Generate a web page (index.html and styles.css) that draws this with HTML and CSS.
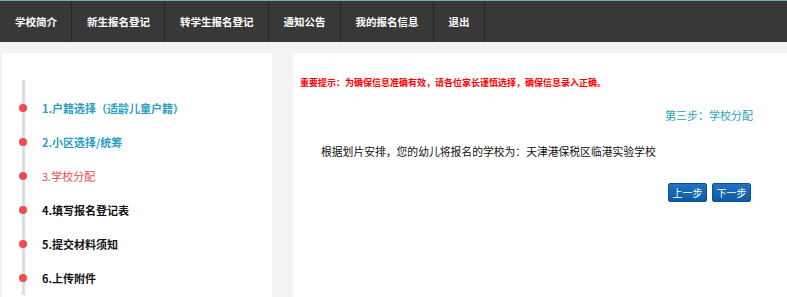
FILE: index.html
```html
<!DOCTYPE html>
<html lang="zh-CN">
<head>
    <meta charset="UTF-8">
    <title>网上报名 - 学校分配</title>
    <link rel="stylesheet" href="styles.css">
</head>
<body>

    <nav class="top-nav">
        <a href="#">学校简介</a>
        <a href="#">新生报名登记</a>
        <a href="#">转学生报名登记</a>
        <a href="#">通知公告</a>
        <a href="#">我的报名信息</a>
        <a href="#">退出</a>
    </nav>

    <div class="main">
        <aside class="side">
            <ul class="steps">
                <li class="done">1.户籍选择（适龄儿童户籍）</li>
                <li class="done">2.小区选择/统筹</li>
                <li class="current">3.学校分配</li>
                <li>4.填写报名登记表</li>
                <li>5.提交材料须知</li>
                <li>6.上传附件</li>
            </ul>
        </aside>

        <section class="content">
            <p class="notice">重要提示：为确保信息准确有效，请各位家长谨慎选择，确保信息录入正确。</p>
            <h3 class="step-title">第三步：学校分配</h3>
            <p class="result">根据划片安排，您的幼儿将报名的学校为：天津港保税区临港实验学校</p>
            <div class="actions">
                <button class="btn">上一步</button>
                <button class="btn">下一步</button>
            </div>
        </section>
    </div>

</body>
</html>
```

FILE: styles.css
```css
:root {
    --dark: #383838;
    --teal: #2a9fc0;
    --red: #f04a4a;
    --page: #f3f3f3;
}

body {
    margin: 0;
    background: var(--page);
    font-family: "Microsoft YaHei", "Noto Sans CJK SC", "Liberation Sans", sans-serif;
    color: #222;
    height: 297px;
    overflow: hidden;
}

.top-nav {
    display: flex;
    height: 41px;
    background: var(--dark);
    border-top: 1px solid #6ab7c4;
}

.top-nav a {
    color: #fff;
    text-decoration: none;
    font-size: 10.5px;
    font-weight: bold;
    line-height: 41px;
    padding: 0 14px 0 15px;
    border-right: 1px solid #262626;
}

.main {
    display: flex;
    gap: 21px;
    padding: 11px 0 0 2px;
    height: 244px;
}

.side {
    width: 270px;
    background: #fff;
}

.steps {
    list-style: none;
    margin: 27px 0 0 20px;
    padding: 11px 0 0 0;
    border-left: 3px solid #ddd;
}

.steps li {
    position: relative;
    height: 34px;
    line-height: 34px;
    padding-left: 17px;
    font-size: 11px;
    font-weight: bold;
    color: #111;
}

.steps li::before {
    content: '';
    position: absolute;
    left: -6px;
    top: 13px;
    width: 8px;
    height: 8px;
    border-radius: 50%;
    background: var(--red);
}

.steps li.done { color: var(--teal); }
.steps li.current { color: var(--red); font-weight: normal; }

.content {
    flex: 1;
    background: #fff;
    padding: 0 34px 0 7px;
}

.notice {
    margin: 23px 0 0;
    font-size: 9px;
    font-weight: bold;
    color: #f00;
}

.step-title {
    margin: 18px 0 0;
    text-align: right;
    font-size: 11px;
    font-weight: normal;
    color: var(--teal);
}

.result {
    margin: 20px 0 0 21px;
    font-size: 10.8px;
    color: #111;
}

.actions {
    display: flex;
    justify-content: flex-end;
    gap: 5px;
    margin-top: 24px;
    padding-right: 2px;
}

.btn {
    width: 39px;
    height: 19px;
    padding: 0;
    border: 1px solid #0f4f8e;
    border-radius: 2px;
    background: linear-gradient(#2272c0, #0f5aa3);
    color: #fff;
    font-family: inherit;
    font-size: 10px;
    cursor: pointer;
}
```
